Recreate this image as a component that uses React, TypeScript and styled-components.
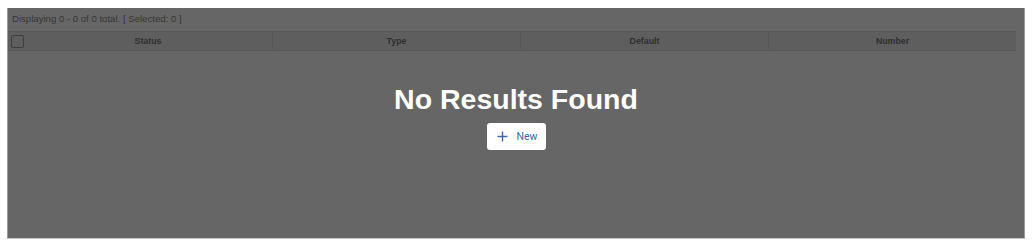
import React from 'react'
import styled, { createGlobalStyle } from 'styled-components'

const GlobalStyle = createGlobalStyle`
    body {
        margin: 8px 0 0 7px;
        font-family: "Liberation Sans", Arial, sans-serif;
        background: #fff;
    }
`

const columns = ['Status', 'Type', 'Default', 'Number']

const App = () => {
    return (
        <>
            <GlobalStyle />
            <Panel>
                <Summary>Displaying 0 - 0 of 0 total. [ Selected: 0 ]</Summary>
                <HeaderRow>
                    <CheckCell>
                        <CheckBox />
                    </CheckCell>
                    {columns.map((name) => (
                        <HeaderCell key={name}>{name}</HeaderCell>
                    ))}
                </HeaderRow>
                <Empty>
                    <EmptyTitle>No Results Found</EmptyTitle>
                    <NewButton>
                        <svg width="11" height="11" viewBox="0 0 11 11">
                            <path d="M5.5 0.5v10M0.5 5.5h10" stroke="currentColor" strokeWidth="1.4" />
                        </svg>
                        New
                    </NewButton>
                </Empty>
            </Panel>
        </>
    )
}

const Panel = styled.div`
    width: 1018px;
    height: 231px;
    box-sizing: border-box;
    background: #666666;
    border-left: 1px solid #9a9a9a;
    border-right: 1px solid #9a9a9a;
    border-bottom: 1px solid #c4c4c4;
    display: flex;
    flex-direction: column;
`

const Summary = styled.div`
    font-size: 9.6px;
    color: #363636;
    padding: 5px 0 0 4px;
    height: 18px;
    box-sizing: border-box;
`

const HeaderRow = styled.div`
    display: grid;
    grid-template-columns: 16px repeat(4, 248px);
    height: 20px;
    margin-top: 5px;
    background: #5e5e5e;
    border-top: 1px solid #575757;
    border-bottom: 1px solid #575757;
    box-sizing: border-box;
    width: 1008px;
`

const CheckCell = styled.div`
    display: flex;
    align-items: center;
    padding-left: 3px;
`

const CheckBox = styled.div`
    width: 11px;
    height: 11px;
    border: 1px solid #3f3f3f;
    border-radius: 2px;
    flex-shrink: 0;
`

const HeaderCell = styled.div`
    display: flex;
    align-items: center;
    justify-content: center;
    font-size: 8.8px;
    font-weight: bold;
    color: #2f2f2f;
    border-left: 1px solid #585858;

    &:nth-child(2) {
        border-left: none;
    }
`

const Empty = styled.div`
    display: flex;
    flex-direction: column;
    align-items: center;
    padding-top: 32px;
`

const EmptyTitle = styled.h1`
    margin: 0;
    font-size: 28.5px;
    line-height: 32px;
    font-weight: bold;
    color: #ffffff;
`

const NewButton = styled.button`
    margin-top: 8px;
    width: 59px;
    height: 27px;
    background: #ffffff;
    border: none;
    border-radius: 3px;
    display: flex;
    align-items: center;
    justify-content: center;
    gap: 9px;
    font-family: Roboto, "Liberation Sans", Arial, sans-serif;
    font-size: 10.5px;
    color: #3d68a5;
    padding: 0 0 0 2px;
`

export default App
